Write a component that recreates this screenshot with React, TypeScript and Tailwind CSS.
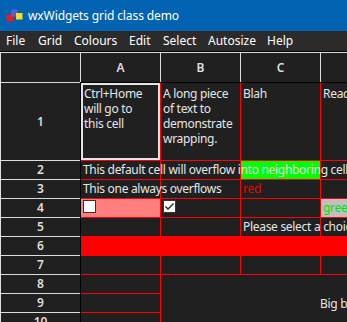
import React from "react";

const LIGHT = "border-[#dcdcdc]";
const RED = "border-[#ff0000]";

function Checkbox({ checked }: { checked?: boolean }) {
  return (
    <span className="flex h-[13px] w-[13px] items-center justify-center border border-[#333333] bg-white">
      {checked && (
        <svg width="11" height="11" viewBox="0 0 11 11">
          <polyline points="1.5,5.5 4,8 9.5,2.5" fill="none" stroke="#222" strokeWidth="1.4" />
        </svg>
      )}
    </span>
  );
}

function Cell({
  className = "",
  children,
}: {
  className?: string;
  children?: React.ReactNode;
}) {
  return <div className={`border-b border-r ${RED} ${className}`}>{children}</div>;
}

export default function App() {
  const menus: [string, string][] = [
    ["File", "w-[32px]"],
    ["Grid", "w-[36px]"],
    ["Colours", "w-[55px]"],
    ["Edit", "w-[34px]"],
    ["Select", "w-[45px]"],
    ["Autosize", "w-[59px]"],
    ["Help", "w-[40px]"],
  ];
  const rowLabels = ["2", "3", "4", "5", "6", "7", "8", "9", "10"];
  const textRow = "flex items-center pl-[2px] whitespace-nowrap";

  return (
    <div
      className="h-[322px] w-[347px] overflow-hidden bg-[#202020] text-[12px] text-[#e6e6e6]"
      style={{ fontFamily: '"Noto Sans", "Open Sans", sans-serif' }}
    >
      {/* Title bar */}
      <div className="flex h-[31px] items-center bg-[#0063b1] text-white tracking-[-0.1px]">
        <svg width="18" height="14" viewBox="0 0 18 14" className="ml-[6px] mr-[4px]">
          <rect x="0.5" y="5.5" width="7" height="7" fill="#e02020" />
          <rect x="5" y="0.5" width="7" height="7" fill="#5a5ae0" />
          <rect x="10" y="4" width="6.5" height="6.5" fill="#f0e020" />
          <rect x="5" y="5.5" width="2.5" height="2" fill="#b04080" />
        </svg>
        <span>wxWidgets grid class demo</span>
      </div>

      {/* Menu bar */}
      <div className="flex h-[20px] items-center bg-[#2b2b2b] pl-[6px] text-white">
        {menus.map(([m, w]) => (
          <span key={m} className={`${w} shrink-0`}>
            {m}
          </span>
        ))}
      </div>
      <div className="h-px bg-black" />

      {/* Column headers */}
      <div className="flex h-[30px] font-semibold text-[#dedede]">
        <div className={`w-[80px] shrink-0 border-l border-t ${LIGHT}`} />
        {["A", "B", "C", "D"].map((c) => (
          <div
            key={c}
            className={`flex w-[80px] shrink-0 items-center justify-center border-l border-t ${LIGHT}`}
          >
            {c === "D" ? "" : c}
          </div>
        ))}
      </div>

      {/* Body */}
      <div className="flex">
        <div className="w-[81px] shrink-0 border-r border-black font-semibold text-[#dedede]">
          <div className={`flex h-[78px] items-center justify-center border-l border-t ${LIGHT}`}>1</div>
          {rowLabels.map((r) => (
            <div
              key={r}
              className={`flex h-[19px] items-center justify-center border-l border-t ${LIGHT}`}
            >
              {r}
            </div>
          ))}
        </div>

        <div className="grid shrink-0 grid-cols-[80px_80px_80px_80px_80px] grid-rows-[78px_repeat(9,19px)] border-t border-black tracking-[-0.3px]">
          {/* Row 1 */}
          <Cell className="p-0">
            <div className="h-[77px] w-[79px] border-2 border-[#e4e4e4] pl-[1px] pt-[1px] leading-[15px]">
              Ctrl+Home
              <br />
              will go to
              <br />
              this cell
            </div>
          </Cell>
          <Cell className="pl-[2px] pt-[3px] leading-[15px]">
            A long piece of text to demonstrate wrapping.
          </Cell>
          <Cell className="pl-[2px] pt-[3px] leading-[15px]">Blah</Cell>
          <Cell className="pl-[2px] pt-[3px] leading-[15px] whitespace-nowrap">Read only</Cell>
          <Cell />

          {/* Row 2 */}
          <Cell className={textRow}>
            <span className="relative z-10">
              This default cell will overflow into neighboring cells, but not if you turn overflow off.
            </span>
          </Cell>
          <Cell />
          <Cell className="bg-[#00ff00]" />
          <Cell />
          <Cell />

          {/* Row 3 */}
          <Cell className={textRow}>
            <span className="relative z-10">This one always overflows</span>
          </Cell>
          <Cell />
          <Cell className={`${textRow} text-[#ee0000]`}>red</Cell>
          <Cell />
          <Cell />

          {/* Row 4 */}
          <Cell className="flex items-start bg-[#ff7f7f] pl-[2px] pt-[1px]">
            <Checkbox />
          </Cell>
          <Cell className="flex items-start pl-[2px] pt-[1px]">
            <Checkbox checked />
          </Cell>
          <Cell />
          <Cell className={`${textRow} bg-[#c0c0c0] text-[#00e000]`}>green</Cell>
          <Cell />

          {/* Row 5 */}
          <Cell />
          <Cell />
          <Cell className={textRow}>
            <span className="relative z-10">Please select a choice</span>
          </Cell>
          <Cell />
          <Cell />

          {/* Row 6 */}
          <div className="col-span-5 border-b border-[#ff0000] bg-[#ff0000]" />

          {/* Row 7 */}
          <Cell />
          <Cell />
          <Cell />
          <Cell />
          <Cell />

          {/* Rows 8-10 */}
          <Cell className="col-start-1 row-start-8" />
          <div className="col-span-4 col-start-2 row-span-3 row-start-8 flex items-center pl-[159px] whitespace-nowrap">
            Big box!
          </div>
          <Cell className="col-start-1 row-start-9" />
          <Cell className="col-start-1 row-start-10" />
        </div>
      </div>
    </div>
  );
}
